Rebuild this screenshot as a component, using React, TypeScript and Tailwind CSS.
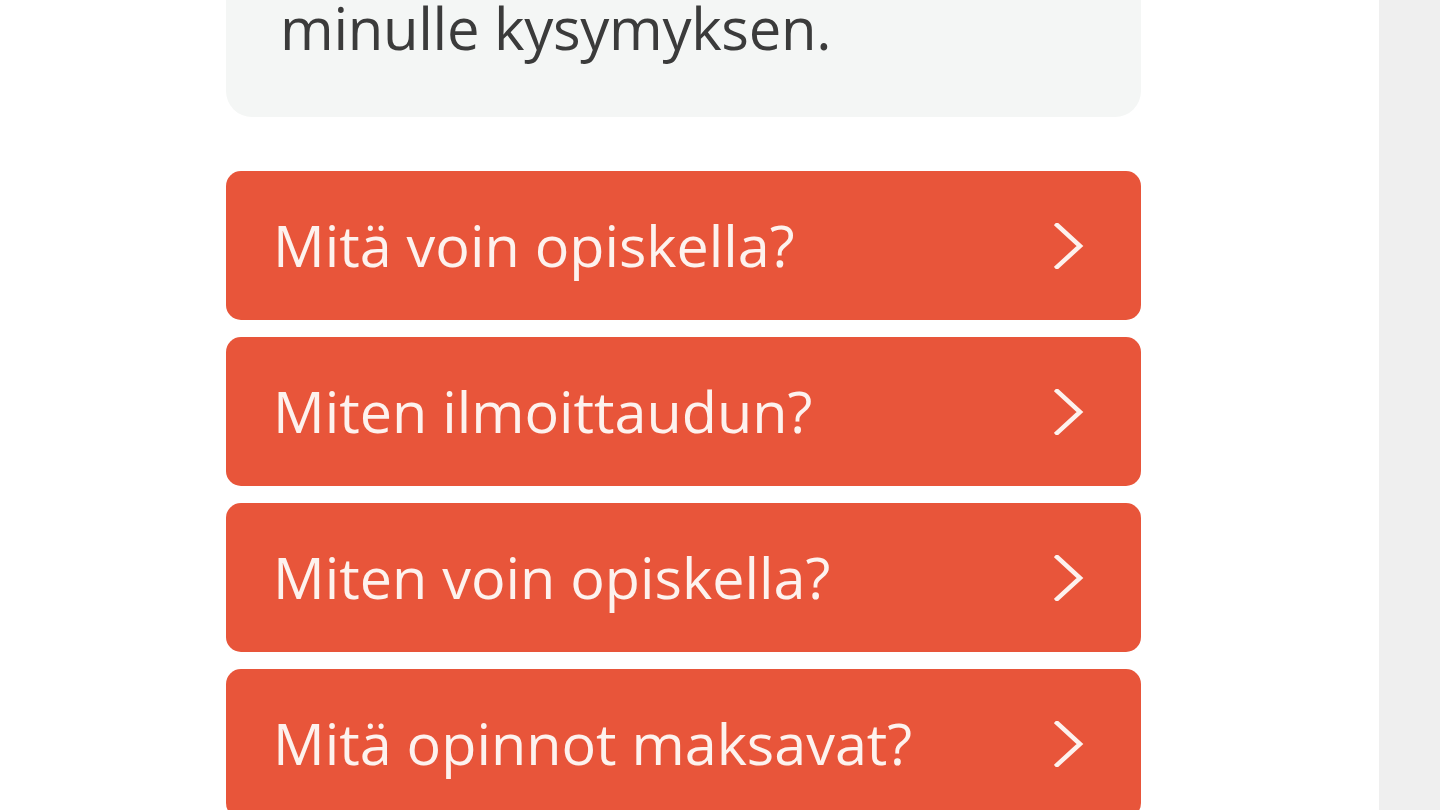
import React from 'react';

const QUESTIONS = [
  'Mitä voin opiskella?',
  'Miten ilmoittaudun?',
  'Miten voin opiskella?',
  'Mitä opinnot maksavat?',
];

const Chevron: React.FC = () => (
  <svg viewBox="0 0 30 46" className="w-[30px] h-[46px] shrink-0" fill="none">
    <path d="M3 2 L26 23 L3 44" stroke="#fdf2ee" strokeWidth="4.5" strokeLinecap="square" strokeLinejoin="miter" />
  </svg>
);

const App: React.FC = () => {
  return (
    <div className="flex h-[810px] w-[1440px] overflow-hidden bg-white" style={{ fontFamily: '"Open Sans", "Noto Sans", sans-serif' }}>
      {/* chat column */}
      <div className="flex-1 flex justify-center pr-[12px]">
        <div className="w-[915px] flex flex-col">
          {/* bot message, top cut off by the viewport */}
          <div className="mt-[-12px] rounded-b-[26px] bg-[#f4f6f5] pl-[54px] pr-10 pb-[49px]">
            <p className="text-[58px] leading-[80px] text-[#3b3b3b] tracking-[-0.3px]">minulle kysymyksen.</p>
          </div>

          {/* quick replies */}
          <div className="mt-[54px] flex flex-col gap-[17px]">
            {QUESTIONS.map((q) => (
              <button
                key={q}
                className="h-[149px] shrink-0 rounded-[15px] bg-[#e8553a] flex items-center justify-between pl-[47px] pr-[57px] text-left"
              >
                <span className="text-[57.5px] leading-none text-[#fdf2ee]">{q}</span>
                <Chevron />
              </button>
            ))}
          </div>
        </div>
      </div>

      {/* scrollbar gutter */}
      <div className="w-[61px] shrink-0 bg-[#efefef]" />
    </div>
  );
};

export default App;
